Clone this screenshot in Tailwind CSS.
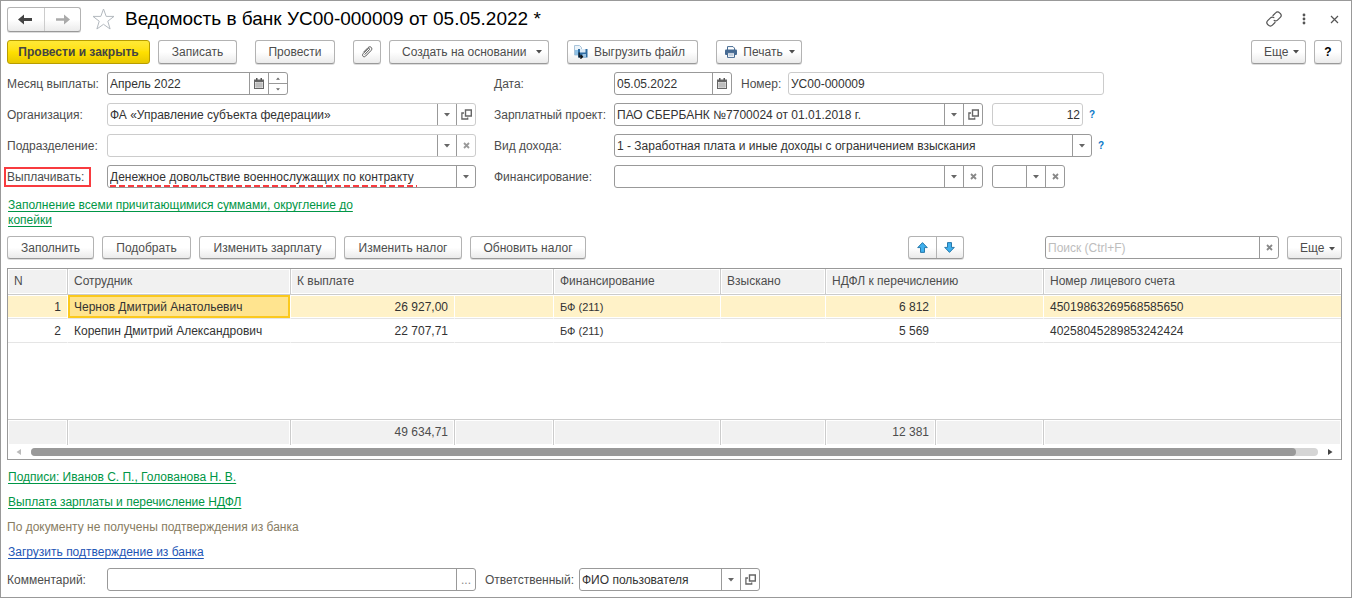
<!DOCTYPE html>
<html lang="ru">
<head>
<meta charset="utf-8">
<meta name="viewport" content="width=device-width, initial-scale=1">
<title>Ведомость в банк УС00-000009</title>
<script src="https://cdn.jsdelivr.net/npm/@tailwindcss/browser@4"></script>
</head>
<body class="bg-white font-['Liberation_Sans',Arial,sans-serif] text-[12px] leading-[15px] text-[#4d4d4d]">
<svg class="hidden">
  <symbol id="caret" viewBox="0 0 6 4"><path d="M0 0h6L3 3.6z" fill="currentColor"/></symbol>
  <symbol id="open" viewBox="0 0 11 11"><path d="M4.500 1h5.800v6H4.500z" fill="none" stroke="currentColor" stroke-width="1.400"/><path d="M3 4H.900v6h5.800V8.400" fill="none" stroke="currentColor" stroke-width="1.300"/></symbol>
  <symbol id="clear" viewBox="0 0 7 7"><path d="M1 1l5 5M6 1L1 6" stroke="currentColor" stroke-width="1.800"/></symbol>
  <symbol id="calendar" viewBox="0 0 10 11"><path d="M0 1.500h10V11H0z" fill="#666"/><path d="M2 0h1.500v2.500H2zM6.500 0H8v2.500H6.500z" fill="#555"/><path d="M1 4h8v6H1z" fill="#e6e6e6"/><path d="M1 6h8M1 8h8M3 4v6M5 4v6M7 4v6" stroke="#999" stroke-width=".6"/></symbol>
</svg>
<div class="flex min-h-screen flex-col border border-[#999] pt-[5px] pr-[9px] pb-[6px] pl-[6px]">

  <header class="flex h-[26px] items-center">
    <div class="flex h-[25px] w-[74px] overflow-hidden rounded-[3px] border border-[#b3b3b3] border-b-[#999] bg-linear-to-b from-white from-50% to-[#ebebeb] shadow-[0_1px_0_#ddd]">
      <button type="button" aria-label="Назад" class="flex flex-1 items-center justify-center border-r border-[#ccc] text-[#444]"><svg class="h-[11px] w-[15px]" viewBox="0 0 15 11"><path d="M0 5.500L6 .500V4h8v3H6v3.500z" fill="currentColor"/></svg></button>
      <button type="button" aria-label="Вперёд" class="flex flex-1 items-center justify-center text-[#aaa]"><svg class="h-[11px] w-[15px]" viewBox="0 0 15 11"><path d="M15 5.500L9 .500V4.200H1v2.600h8v3.700z" fill="currentColor"/></svg></button>
    </div>
    <button type="button" aria-label="В избранное" class="ml-[11px]"><svg class="h-[22px] w-[23px]" viewBox="0 0 23 22"><path d="M11.500 1l2.700 7.400H22l-6.200 4.800 2.300 7.800-6.600-4.700L4.900 21l2.300-7.800L1 8.400h7.800z" fill="none" stroke="#b3b9bf"/></svg></button>
    <h1 class="ml-[10px] text-[19px] leading-[24px] text-black">Ведомость в банк УС00-000009 от 05.05.2022 *</h1>
    <div class="ml-auto flex items-center gap-[20px] pr-[3px] text-[#555]">
      <button type="button" aria-label="Получить ссылку"><svg class="h-[16px] w-[16px]" viewBox="0 0 16 16" fill="none" stroke="currentColor" stroke-width="1.200" stroke-linecap="round"><path d="M7 4.500l2.600-2.700a2.700 2.700 0 0 1 4 0l.700.700a2.700 2.700 0 0 1 0 3.800l-2.800 2.800a2.600 2.600 0 0 1-3.300.300M9 11.500l-2.600 2.700a2.700 2.700 0 0 1-4 0l-.700-.700a2.700 2.700 0 0 1 0-3.800l2.800-2.800a2.600 2.600 0 0 1 3.300-.300"/></svg></button>
      <button type="button" aria-label="Меню"><svg class="h-[12px] w-[4px]" viewBox="0 0 4 12" fill="currentColor"><circle cx="2" cy="2" r="1.400"/><circle cx="2" cy="6" r="1.400"/><circle cx="2" cy="10" r="1.400"/></svg></button>
      <button type="button" aria-label="Закрыть" class="ml-[4px]"><svg class="h-[9px] w-[9px]" viewBox="0 0 9 9"><path d="M1 1l7 7M8 1L1 8" stroke="currentColor" stroke-width="1.200"/></svg></button>
    </div>
  </header>

  <div class="mt-[8px] flex h-[24px]" role="toolbar" aria-label="Команды документа">
    <button type="button" class="w-[143px] rounded-[3px] border border-[#b89d00] bg-linear-to-b from-[#ffe936] via-[#ffe000] to-[#e8c800] font-bold text-[#444]">Провести и закрыть</button>
    <button type="button" class="ml-[8px] w-[79px] rounded-[3px] border border-[#b3b3b3] border-b-[#999] bg-linear-to-b from-white from-50% to-[#ebebeb] shadow-[0_1px_0_#ddd]">Записать</button>
    <button type="button" class="ml-[18px] w-[80px] rounded-[3px] border border-[#b3b3b3] border-b-[#999] bg-linear-to-b from-white from-50% to-[#ebebeb] shadow-[0_1px_0_#ddd]">Провести</button>
    <button type="button" aria-label="Присоединённые файлы" class="ml-[18px] flex w-[28px] items-center justify-center rounded-[3px] border border-[#b3b3b3] border-b-[#999] bg-linear-to-b from-white from-50% to-[#ebebeb] shadow-[0_1px_0_#ddd]"><svg class="h-[12px] w-[12px]" viewBox="0 0 12 12" fill="none" stroke="#555" stroke-linecap="round"><path d="M4 8.300l4.300-4.500c.900-.900-.300-2-1.200-1.100L2.200 7.600c-1.800 1.900.500 4.400 2.400 2.500l5.500-5.600c2.100-2.300-.800-5.100-3-2.900L2.700 6"/></svg></button>
    <button type="button" class="ml-[8px] flex w-[160px] items-center justify-between rounded-[3px] border border-[#b3b3b3] border-b-[#999] bg-linear-to-b from-white from-50% to-[#ebebeb] pr-[6px] pl-[12px] shadow-[0_1px_0_#ddd]">Создать на основании<svg class="h-[4px] w-[6px]"><use href="#caret"/></svg></button>
    <button type="button" class="ml-[18px] flex w-[131px] items-center justify-between rounded-[3px] border border-[#b3b3b3] border-b-[#999] bg-linear-to-b from-white from-50% to-[#ebebeb] pr-[12px] pl-[6px] shadow-[0_1px_0_#ddd]"><svg class="h-[14px] w-[14px]" viewBox="0 0 14 14"><path d="M.500.500h5l2 2V10h-7z" fill="#eaf3fa" stroke="#a9c4da"/><path d="M1 5h3v5H1z" fill="#8fc0e4"/><path d="M4 4h9.500v8.500H4z" fill="#2f6da3"/><path d="M6 4h5.500v3.500H6z" fill="#dcebf7"/><path d="M8.500 9h3.500v3.500H8.500z" fill="#9cc3e2"/><path d="M5.200 7.500v4.300H8M6.500 10l2 1.800-2 1.900" fill="none" stroke="#111" stroke-width="1.200"/></svg>Выгрузить файл</button>
    <button type="button" class="ml-[18px] flex w-[86px] items-center justify-between rounded-[3px] border border-[#b3b3b3] border-b-[#999] bg-linear-to-b from-white from-50% to-[#ebebeb] pr-[6px] pl-[8px] shadow-[0_1px_0_#ddd]"><svg class="h-[12px] w-[12px]" viewBox="0 0 12 12"><path d="M2.500 4V.600h5.500l1.500 1.500V4" fill="#fff" stroke="#466a92"/><rect y="3.500" width="12" height="5.500" rx="1" fill="#466a92"/><path d="M2.500 6.800h7v4.600h-7z" fill="#fff" stroke="#466a92"/><path d="M3.500 9h5" stroke="#8aa3be"/></svg>Печать<svg class="h-[4px] w-[6px]"><use href="#caret"/></svg></button>
    <button type="button" class="ml-auto flex w-[55px] items-center justify-between rounded-[3px] border border-[#b3b3b3] border-b-[#999] bg-linear-to-b from-white from-50% to-[#ebebeb] pr-[6px] pl-[12px] shadow-[0_1px_0_#ddd]">Еще<svg class="h-[4px] w-[6px]"><use href="#caret"/></svg></button>
    <button type="button" aria-label="Справка" class="ml-[8px] w-[28px] rounded-[3px] border border-[#b3b3b3] border-b-[#999] bg-linear-to-b from-white from-50% to-[#ebebeb] font-bold text-black shadow-[0_1px_0_#ddd]">?</button>
  </div>

  <div class="mt-[8px] flex gap-[18px]">
    <div class="flex w-[469px] flex-col gap-[8px]">
      <div class="flex h-[23px] items-center">
        <label for="month" class="w-[100px] pt-[2px]">Месяц выплаты:</label>
        <div class="flex h-full w-[181px] rounded-[3px] border border-[#999]">
          <input id="month" value="Апрель 2022" class="w-0 flex-1 px-[2px] pt-[2px] text-[#333]">
          <button type="button" aria-label="Календарь" class="flex w-[19px] items-center justify-center border-l border-[#999]"><svg class="h-[11px] w-[10px]"><use href="#calendar"/></svg></button>
          <div class="flex w-[19px] flex-col border-l border-[#999] text-[#666]">
            <button type="button" aria-label="Больше" class="flex flex-1 items-center justify-center border-b border-[#999]"><svg class="h-[3px] w-[4px] rotate-180"><use href="#caret"/></svg></button>
            <button type="button" aria-label="Меньше" class="flex flex-1 items-center justify-center"><svg class="h-[3px] w-[4px]"><use href="#caret"/></svg></button>
          </div>
        </div>
      </div>
      <div class="flex h-[23px] items-center">
        <label for="org" class="w-[100px] pt-[2px]">Организация:</label>
        <div class="flex h-full flex-1 rounded-[3px] border border-[#ccc] text-[#666]">
          <input id="org" value="ФА «Управление субъекта федерации»" class="w-0 flex-1 px-[2px] pt-[2px] text-[#333]">
          <button type="button" aria-label="Выбрать" class="flex w-[19px] items-center justify-center border-l border-[#999]"><svg class="h-[4px] w-[6px]"><use href="#caret"/></svg></button>
          <button type="button" aria-label="Открыть" class="flex w-[19px] items-center justify-center border-l border-[#999]"><svg class="h-[11px] w-[11px]"><use href="#open"/></svg></button>
        </div>
      </div>
      <div class="flex h-[23px] items-center">
        <label for="dept" class="w-[100px] pt-[2px]">Подразделение:</label>
        <div class="flex h-full flex-1 rounded-[3px] border border-[#ccc] text-[#666]">
          <input id="dept" class="w-0 flex-1 px-[2px] pt-[2px] text-[#333]">
          <button type="button" aria-label="Выбрать" class="flex w-[19px] items-center justify-center border-l border-[#999]"><svg class="h-[4px] w-[6px]"><use href="#caret"/></svg></button>
          <button type="button" aria-label="Очистить" class="flex w-[19px] items-center justify-center border-l border-[#999] text-[#999]"><svg class="h-[7px] w-[7px]"><use href="#clear"/></svg></button>
        </div>
      </div>
      <div class="flex h-[23px] items-center">
        <div class="w-[100px]"><label for="pay" class="block h-[14px] w-[81px] leading-[14px] outline-2 outline-offset-1 outline-[#f83b3f]">Выплачивать:</label></div>
        <div class="relative flex h-full flex-1 rounded-[3px] border border-[#999] text-[#666]">
          <input id="pay" value="Денежное довольствие военнослужащих по контракту" class="w-0 flex-1 px-[2px] pt-[2px] text-[#333]">
          <button type="button" aria-label="Выбрать" class="flex w-[19px] items-center justify-center border-l border-[#999]"><svg class="h-[4px] w-[6px]"><use href="#caret"/></svg></button>
          <span class="pointer-events-none absolute bottom-0 left-[2px] h-[2px] w-[307px] bg-[repeating-linear-gradient(90deg,#f83b3f_0_6px,transparent_6px_9px)]"></span>
        </div>
      </div>
      <a href="#" class="ml-[1px] w-[360px] pt-[2px] text-[#009646] underline underline-offset-2">Заполнение всеми причитающимися суммами, округление до копейки</a>
    </div>

    <div class="flex flex-1 flex-col gap-[8px]">
      <div class="flex h-[23px] items-center">
        <label for="date" class="w-[120px] pt-[2px]">Дата:</label>
        <div class="flex h-full w-[118px] rounded-[3px] border border-[#999]">
          <input id="date" value="05.05.2022" class="w-0 flex-1 px-[2px] pt-[2px] text-[#333]">
          <button type="button" aria-label="Календарь" class="flex w-[19px] items-center justify-center border-l border-[#999]"><svg class="h-[11px] w-[10px]"><use href="#calendar"/></svg></button>
        </div>
        <label for="num" class="ml-[9px] w-[47px] pt-[2px]">Номер:</label>
        <input id="num" value="УС00-000009" class="h-full w-[316px] rounded-[3px] border border-[#ccc] px-[2px] text-[#333]">
      </div>
      <div class="flex h-[23px] items-center">
        <label for="project" class="w-[120px] pt-[2px]">Зарплатный проект:</label>
        <div class="flex h-full w-[369px] rounded-[3px] border border-[#999] text-[#666]">
          <input id="project" value="ПАО СБЕРБАНК №7700024 от 01.01.2018 г." class="w-0 flex-1 px-[2px] pt-[2px] text-[#333]">
          <button type="button" aria-label="Выбрать" class="flex w-[19px] items-center justify-center border-l border-[#999]"><svg class="h-[4px] w-[6px]"><use href="#caret"/></svg></button>
          <button type="button" aria-label="Открыть" class="flex w-[19px] items-center justify-center border-l border-[#999]"><svg class="h-[11px] w-[11px]"><use href="#open"/></svg></button>
        </div>
        <input aria-label="Номер реестра" value="12" class="ml-[9px] h-full w-[91px] rounded-[3px] border border-[#ccc] px-[2px] text-right text-[#333]">
        <button type="button" aria-label="Подсказка" class="ml-[6px] text-[10px] font-bold text-[#0a78c8]">?</button>
      </div>
      <div class="flex h-[23px] items-center">
        <label for="income" class="w-[120px] pt-[2px]">Вид дохода:</label>
        <div class="flex h-full w-[478px] rounded-[3px] border border-[#999] text-[#666]">
          <input id="income" value="1 - Заработная плата и иные доходы с ограничением взыскания" class="w-0 flex-1 px-[2px] pt-[2px] text-[#333]">
          <button type="button" aria-label="Выбрать" class="flex w-[19px] items-center justify-center border-l border-[#999]"><svg class="h-[4px] w-[6px]"><use href="#caret"/></svg></button>
        </div>
        <button type="button" aria-label="Подсказка" class="ml-[6px] text-[10px] font-bold text-[#0a78c8]">?</button>
      </div>
      <div class="flex h-[23px] items-center">
        <label for="fin" class="w-[120px] pt-[2px]">Финансирование:</label>
        <div class="flex h-full w-[369px] rounded-[3px] border border-[#999] text-[#666]">
          <input id="fin" class="w-0 flex-1 px-[2px] pt-[2px] text-[#333]">
          <button type="button" aria-label="Выбрать" class="flex w-[19px] items-center justify-center border-l border-[#999]"><svg class="h-[4px] w-[6px]"><use href="#caret"/></svg></button>
          <button type="button" aria-label="Очистить" class="flex w-[19px] items-center justify-center border-l border-[#999] text-[#888]"><svg class="h-[7px] w-[7px]"><use href="#clear"/></svg></button>
        </div>
        <div class="ml-[9px] flex h-full w-[73px] rounded-[3px] border border-[#999] text-[#666]">
          <input aria-label="Статья" class="w-0 flex-1 px-[2px] pt-[2px] text-[#333]">
          <button type="button" aria-label="Выбрать" class="flex w-[19px] items-center justify-center border-l border-[#999]"><svg class="h-[4px] w-[6px]"><use href="#caret"/></svg></button>
          <button type="button" aria-label="Очистить" class="flex w-[19px] items-center justify-center border-l border-[#999] text-[#888]"><svg class="h-[7px] w-[7px]"><use href="#clear"/></svg></button>
        </div>
      </div>
    </div>
  </div>

  <div class="mt-[8px] flex h-[23px]" role="toolbar" aria-label="Команды таблицы">
    <div class="flex flex-1 gap-[8px]">
      <button type="button" class="w-[87px] rounded-[3px] border border-[#b3b3b3] border-b-[#999] bg-linear-to-b from-white from-50% to-[#ebebeb] pt-[2px] shadow-[0_1px_0_#ddd]">Заполнить</button>
      <button type="button" class="w-[89px] rounded-[3px] border border-[#b3b3b3] border-b-[#999] bg-linear-to-b from-white from-50% to-[#ebebeb] pt-[2px] shadow-[0_1px_0_#ddd]">Подобрать</button>
      <button type="button" class="w-[137px] rounded-[3px] border border-[#b3b3b3] border-b-[#999] bg-linear-to-b from-white from-50% to-[#ebebeb] pt-[2px] shadow-[0_1px_0_#ddd]">Изменить зарплату</button>
      <button type="button" class="w-[118px] rounded-[3px] border border-[#b3b3b3] border-b-[#999] bg-linear-to-b from-white from-50% to-[#ebebeb] pt-[2px] shadow-[0_1px_0_#ddd]">Изменить налог</button>
      <button type="button" class="w-[116px] rounded-[3px] border border-[#b3b3b3] border-b-[#999] bg-linear-to-b from-white from-50% to-[#ebebeb] pt-[2px] shadow-[0_1px_0_#ddd]">Обновить налог</button>
    </div>
    <div class="flex w-[56px] rounded-[3px] border border-[#b3b3b3] border-b-[#999] bg-linear-to-b from-white from-50% to-[#ebebeb] shadow-[0_1px_0_#ddd]">
      <button type="button" aria-label="Вверх" class="flex flex-1 items-center justify-center border-r border-[#b3b3b3]"><svg class="h-[11px] w-[11px]" viewBox="0 0 11 11"><path d="M5.500.600l4.800 5H7.500v4.800h-4V5.600H.700z" fill="#3fb0ee" stroke="#1c6fa3" stroke-width=".9"/></svg></button>
      <button type="button" aria-label="Вниз" class="flex flex-1 items-center justify-center"><svg class="h-[11px] w-[11px] rotate-180" viewBox="0 0 11 11"><path d="M5.500.600l4.800 5H7.500v4.800h-4V5.600H.700z" fill="#3fb0ee" stroke="#1c6fa3" stroke-width=".9"/></svg></button>
    </div>
    <div class="ml-[81px] flex w-[234px] rounded-[3px] border border-[#999]">
      <input aria-label="Поиск" placeholder="Поиск (Ctrl+F)" class="w-0 flex-1 px-[2px] pt-[2px] text-[#333] placeholder:text-[#bdbdbd]">
      <button type="button" aria-label="Очистить" class="flex w-[19px] items-center justify-center border-l border-[#999] text-[#888]"><svg class="h-[7px] w-[7px]"><use href="#clear"/></svg></button>
    </div>
    <button type="button" class="ml-[8px] flex w-[55px] items-center justify-between rounded-[3px] border border-[#b3b3b3] border-b-[#999] bg-linear-to-b from-white from-50% to-[#ebebeb] pt-[2px] pr-[6px] pl-[12px] shadow-[0_1px_0_#ddd]">Еще<svg class="h-[4px] w-[6px]"><use href="#caret"/></svg></button>
  </div>

  <div class="mt-[9px] border border-[#999]">
    <table class="w-full table-fixed border-separate border-spacing-0 text-left">
      <colgroup><col class="w-[60px]"><col class="w-[223px]"><col class="w-[164px]"><col class="w-[99px]"><col class="w-[167px]"><col class="w-[105px]"><col class="w-[110px]"><col class="w-[108px]"><col></colgroup>
      <thead>
        <tr class="h-[26px] bg-[#f1f1f1] *:border-r *:border-b *:border-[#ccc] *:px-[6px] *:font-normal *:shadow-[inset_0_0_0_1px_#fff]">
          <th>N</th><th>Сотрудник</th><th colspan="2">К выплате</th><th>Финансирование</th><th>Взыскано</th><th colspan="2">НДФЛ к перечислению</th><th class="border-r-0!">Номер лицевого счета</th>
        </tr>
      </thead>
      <tbody class="text-[#333]">
        <tr class="h-[24px] bg-[#fff2c8] *:border-r *:border-b *:border-r-white *:border-b-[#e5e5e5] *:px-[6px] *:pt-[2px] *:shadow-[inset_0_1px_0_#fff,inset_0_-1px_0_#fff]">
          <td class="text-right">1</td><td class="bg-[#ffe48f] shadow-[inset_0_0_0_2px_#fbc91e]!">Чернов Дмитрий Анатольевич</td><td class="text-right">26 927,00</td><td></td><td class="text-[11px]">БФ (211)</td><td></td><td class="text-right">6 812</td><td></td><td class="border-r-0!">45019863269568585650</td>
        </tr>
        <tr class="h-[24px] *:border-r *:border-b *:border-r-white *:border-b-[#e5e5e5] *:px-[6px] *:pt-[2px]">
          <td class="text-right">2</td><td>Корепин Дмитрий Александрович</td><td class="text-right">22 707,71</td><td></td><td class="text-[11px]">БФ (211)</td><td></td><td class="text-right">5 569</td><td></td><td class="border-r-0!">40258045289853242424</td>
        </tr>
        <tr class="h-[76px]"><td colspan="9"></td></tr>
      </tbody>
      <tfoot>
        <tr class="h-[26px] bg-[#f1f1f1] *:border-t *:border-r *:border-[#ccc] *:px-[6px] *:shadow-[inset_0_0_0_1px_#fff]">
          <td></td><td></td><td class="text-right">49 634,71</td><td></td><td></td><td></td><td class="text-right">12 381</td><td></td><td class="border-r-0!"></td>
        </tr>
      </tfoot>
    </table>
    <div class="flex h-[14px] items-center px-[8px]">
      <svg class="h-[6px] w-[5px]" viewBox="0 0 5 6"><path d="M5 0v6L.500 3z" fill="#bbb"/></svg>
      <div class="mx-[10px] h-[8px] flex-1 rounded-full bg-[#d5d5d5]"><div class="h-full w-[98.3%] rounded-full bg-[#999]"></div></div>
      <svg class="h-[6px] w-[5px]" viewBox="0 0 5 6"><path d="M0 0v6l4.500-3z" fill="#444"/></svg>
    </div>
  </div>

  <div class="mt-[10px] flex flex-col items-start gap-[10px]">
    <a href="#" class="ml-[1px] text-[#009646] underline underline-offset-2">Подписи: Иванов С. П., Голованова Н. В.</a>
    <a href="#" class="ml-[1px] text-[#009646] underline underline-offset-2">Выплата зарплаты и перечисление НДФЛ</a>
    <p class="text-[#877c62]">По документу не получены подтверждения из банка</p>
    <a href="#" class="ml-[1px] text-[#1d55b5] underline underline-offset-2">Загрузить подтверждение из банка</a>
  </div>

  <div class="mt-[8px] flex h-[23px] items-center">
    <label for="comment" class="w-[100px] pt-[2px]">Комментарий:</label>
    <div class="flex h-full w-[369px] rounded-[3px] border border-[#999]">
      <input id="comment" class="w-0 flex-1 px-[2px] pt-[2px] text-[#333]">
      <button type="button" aria-label="Редактировать комментарий" class="w-[19px] border-l border-[#999] pt-[2px] text-[#888]">...</button>
    </div>
    <label for="resp" class="ml-[9px] w-[94px] pt-[2px]">Ответственный:</label>
    <div class="flex h-full w-[181px] rounded-[3px] border border-[#999] text-[#666]">
      <input id="resp" value="ФИО пользователя" class="w-0 flex-1 px-[2px] pt-[2px] text-[#333]">
      <button type="button" aria-label="Выбрать" class="flex w-[19px] items-center justify-center border-l border-[#999]"><svg class="h-[4px] w-[6px]"><use href="#caret"/></svg></button>
      <button type="button" aria-label="Открыть" class="flex w-[19px] items-center justify-center border-l border-[#999]"><svg class="h-[11px] w-[11px]"><use href="#open"/></svg></button>
    </div>
  </div>
</div>
</body>
</html>
